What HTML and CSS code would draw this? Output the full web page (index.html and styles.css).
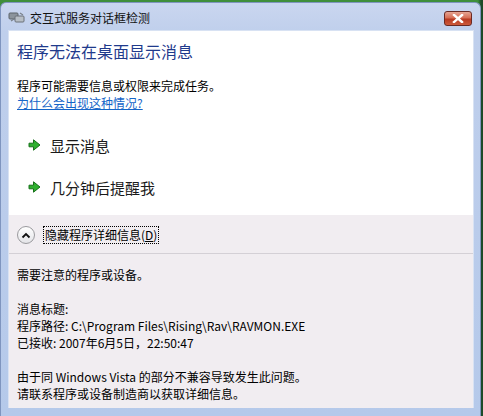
FILE: index.html
```html
<!DOCTYPE html>
<html lang="zh-CN">
<head>
    <meta charset="UTF-8">
    <title>交互式服务对话框检测</title>
    <link rel="stylesheet" href="styles.css">
</head>
<body>

    <div class="window">
        <div class="titlebar">
            <svg class="app-icon" width="18" height="14" viewBox="0 0 18 14">
                <rect x="1" y="3" width="9" height="6" rx="1" fill="#8c949c" stroke="#5d646b" stroke-width="1"/>
                <rect x="7" y="6" width="9" height="6" rx="1" fill="#b8bfc6" stroke="#6b7178" stroke-width="1"/>
                <path d="M3 11 L6 9 M12 3 L15 5" stroke="#7a828a" stroke-width="1.2"/>
            </svg>
            <span class="title">交互式服务对话框检测</span>
            <div class="close-btn">
                <svg width="12" height="9" viewBox="0 0 12 9">
                    <path d="M2 1 L10 8 M10 1 L2 8" stroke="#fff" stroke-width="2.4" stroke-linecap="square"/>
                </svg>
            </div>
        </div>

        <div class="client">
            <div class="main">
                <h1>程序无法在桌面显示消息</h1>
                <p>程序可能需要信息或权限来完成任务。<br><a href="#">为什么会出现这种情况?</a></p>

                <ul class="commands">
                    <li>
                        <svg class="arrow" width="13" height="12" viewBox="0 0 13 12">
                            <path d="M1 4.2 H5.5 V0.8 L12 6 L5.5 11.2 V7.8 H1 Z" fill="#2fb02f" stroke="#17701a" stroke-width="1" stroke-linejoin="round"/>
                        </svg>
                        <span>显示消息</span>
                    </li>
                    <li>
                        <svg class="arrow" width="13" height="12" viewBox="0 0 13 12">
                            <path d="M1 4.2 H5.5 V0.8 L12 6 L5.5 11.2 V7.8 H1 Z" fill="#2fb02f" stroke="#17701a" stroke-width="1" stroke-linejoin="round"/>
                        </svg>
                        <span>几分钟后提醒我</span>
                    </li>
                </ul>
            </div>

            <div class="details">
                <div class="toggle">
                    <span class="chevron">
                        <svg width="10" height="7" viewBox="0 0 10 7">
                            <path d="M1.5 5.5 L5 2 L8.5 5.5" fill="none" stroke="#111" stroke-width="1.8"/>
                        </svg>
                    </span>
                    <span class="focus">隐藏程序详细信息(<u>D</u>)</span>
                </div>

                <div class="info">
                    <p>需要注意的程序或设备。</p>
                    <p>消息标题:<br>程序路径: C:\Program Files\Rising\Rav\RAVMON.EXE<br>已接收: 2007年6月5日，22:50:47</p>
                    <p>由于同 Windows Vista 的部分不兼容导致发生此问题。<br>请联系程序或设备制造商以获取详细信息。</p>
                </div>
            </div>
        </div>
    </div>

</body>
</html>
```

FILE: styles.css
```css
html, body {
    margin: 0;
    padding: 0;
}

body {
    width: 483px;
    height: 416px;
    overflow: hidden;
    background: linear-gradient(to right, #3f8f3a 0, #3f8f3a 478px, #1d4a28 481px);
    font-family: "Noto Sans CJK SC", "Liberation Sans", sans-serif;
    font-size: 12px;
    color: #000;
}

.window {
    width: 479px;
    height: 413px;
    margin-top: 2px;
    border: 1px solid #7f95bf;
    border-bottom: none;
    border-radius: 6px 6px 0 0;
    background: linear-gradient(to bottom, #cad6ef 0, #bfcfec 30px, #b5c9ea 100%);
    display: flex;
    flex-direction: column;
}

/* title bar */
.titlebar {
    height: 27px;
    flex-shrink: 0;
    display: flex;
    align-items: center;
    padding: 0 8px 0 7px;
}

.app-icon {
    margin-right: 4px;
    margin-top: 1px;
}

.title {
    flex: 1;
    font-size: 12px;
    color: #111;
    margin-top: 1px;
}

.close-btn {
    width: 26px;
    height: 13px;
    margin-top: 3px;
    border: 1px solid #6a2a24;
    border-radius: 3px;
    background: linear-gradient(to bottom, #e6a594 0, #d66e55 45%, #b83a22 55%, #cc5a3c 100%);
    display: flex;
    justify-content: center;
    align-items: center;
}

/* client area */
.client {
    height: 378px;
    flex-shrink: 0;
    margin: 0 6px 0 7px;
    border: 1px solid #d8e2f3;
    border-bottom: none;
    box-sizing: border-box;
    display: flex;
    flex-direction: column;
    overflow: hidden;
}

.main {
    height: 184px;
    flex-shrink: 0;
    background: #fff;
    padding: 9px 8px 0;
    box-sizing: border-box;
}

h1 {
    margin: 0;
    font-size: 16px;
    line-height: 22px;
    font-weight: normal;
    color: #1f3a8c;
}

.main p {
    margin: 15px 0 0;
    line-height: 17px;
}

a {
    color: #1565c8;
    text-decoration: underline;
}

.commands {
    list-style: none;
    margin: 13px 0 0;
    padding: 0;
}

.commands li {
    height: 42px;
    display: flex;
    align-items: center;
    padding-left: 11px;
    font-size: 15px;
    color: #1a1a1a;
}

.arrow {
    margin-right: 9px;
}

/* details */
.details {
    flex: 1;
    min-height: 0;
    background: #f1edf1;
    padding: 11px 8px 0;
}

.toggle {
    display: flex;
    align-items: center;
    height: 18px;
    padding-bottom: 9px;
    border-bottom: 1px solid #d4d0d6;
    margin: 0 -8px;
    padding-left: 8px;
}

.chevron {
    width: 16px;
    height: 16px;
    border: 1px solid #9a9a9e;
    border-radius: 50%;
    background: linear-gradient(to bottom, #ffffff, #e4e4e8);
    display: flex;
    justify-content: center;
    align-items: center;
    margin-right: 8px;
}

.focus {
    border: 1px dotted #000;
    padding: 0 1px;
    line-height: 16px;
    font-size: 12px;
}

.info {
    padding-top: 12px;
}

.info p {
    margin: 0 0 17px;
    line-height: 17px;
}
```
